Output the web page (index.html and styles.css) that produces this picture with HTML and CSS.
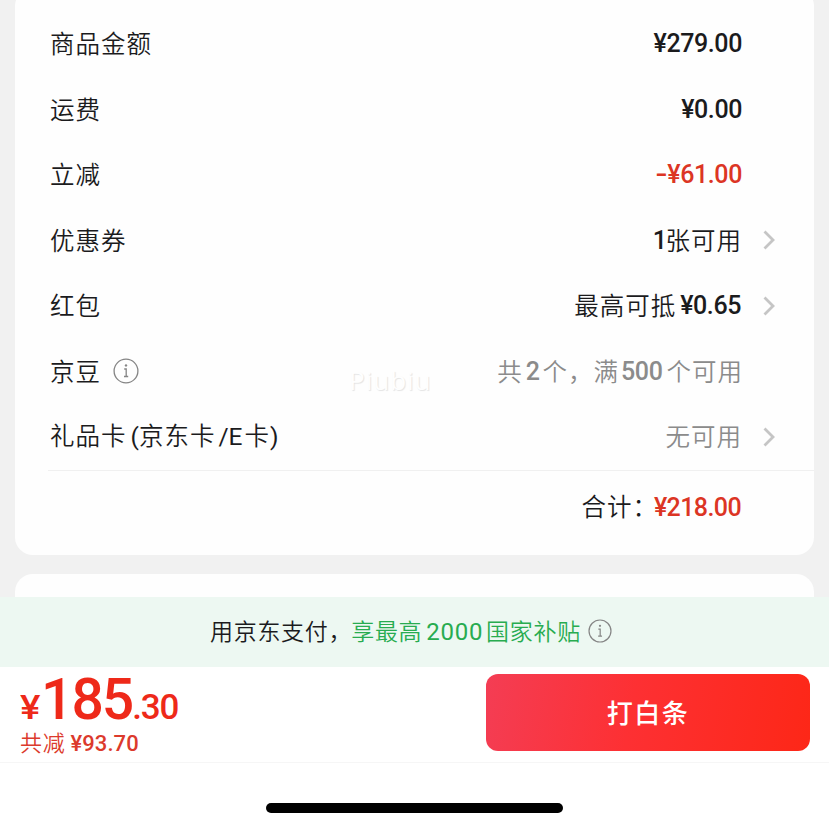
FILE: index.html
```html
<!DOCTYPE html>
<html lang="zh-CN">
<head>
<meta charset="utf-8">
<title>确认订单</title>
<link rel="stylesheet" href="styles.css">
</head>
<body>
<main class="screen">
  <section class="card summary">
    <div class="row"><span class="label">商品金额</span><span class="value"><b class="num">¥279.00</b></span></div>
    <div class="row"><span class="label">运费</span><span class="value"><b class="num">¥0.00</b></span></div>
    <div class="row"><span class="label">立减</span><span class="value red"><b class="num"><span class="minus">-</span>¥61.00</b></span></div>
    <div class="row"><span class="label">优惠券</span><span class="value cjk-end"><b class="num one">1</b>张可用</span>
      <svg class="chevron" viewBox="0 0 14 22"><path d="M2.5 2.5 11 11 2.5 19.5"/></svg></div>
    <div class="row"><span class="label">红包</span><span class="value">最高可抵<b class="num gap">¥0.65</b></span>
      <svg class="chevron" viewBox="0 0 14 22"><path d="M2.5 2.5 11 11 2.5 19.5"/></svg></div>
    <div class="row"><span class="label">京豆</span>
      <svg class="info" viewBox="0 0 26 26"><circle cx="13" cy="13" r="11.9"/><path d="M11.2 11h2v7.3M11 18.5h4.2"/><circle class="dot" cx="13" cy="7.4" r="1.2"/></svg>
      <span class="value gray cjk-end">共<b class="num two">2</b>个，满<b class="num five">500</b>个可用</span></div>
    <div class="row"><span class="label">礼品卡<span class="lat paren">(</span>京东卡<span class="lat slash">/E</span>卡<span class="lat">)</span></span><span class="value gray cjk-end">无可用</span>
      <svg class="chevron" viewBox="0 0 14 22"><path d="M2.5 2.5 11 11 2.5 19.5"/></svg></div>
    <div class="total"><span class="total-label">合计：</span><b class="num red">¥218.00</b></div>
    <span class="watermark">Piubiu</span>
  </section>
  <section class="card next"></section>
  <section class="promo">
    <span class="promo-dark">用京东支付，</span><span class="promo-green">享最高<span class="amount">2000</span>国家补贴</span>
    <svg class="info small" viewBox="0 0 26 26"><circle cx="13" cy="13" r="11.9"/><path d="M11.2 11h2v7.3M11 18.5h4.2"/><circle class="dot" cx="13" cy="7.4" r="1.2"/></svg>
  </section>
  <footer class="paybar">
    <div class="price">
      <div class="price-main"><span class="yen">¥</span><span class="whole">185</span><span class="cents">.30</span></div>
      <div class="saved">共减<b>¥93.70</b></div>
    </div>
    <button class="pay">打白条</button>
  </footer>
  <div class="home"><div class="home-bar"></div></div>
</main>
</body>
</html>
```

FILE: styles.css
```css
* { box-sizing: border-box; }
body { margin: 0; }
.screen {
  width: 829px;
  height: 828px;
  overflow: hidden;
  display: flex;
  flex-direction: column;
  background: #f1f1f1;
  color: #1b1b1d;
  font-family: "Noto Sans CJK SC", sans-serif;
  font-size: 24.5px;
  letter-spacing: 1px;
  white-space: nowrap;
}
.card { margin: 0 15px; background: #fefefe; border-radius: 18px; flex: none; }
.summary { position: relative; height: 567px; margin-top: -12px; padding-top: 23px; }
.row { display: flex; align-items: center; height: 65.5px; padding: 0 38px 0 35px; font-weight: 350; }
.label { line-height: 36px; padding-bottom: 1px; }
.value { margin-left: auto; margin-right: 34px; line-height: 36px; padding-bottom: 1px; display: flex; align-items: center; }
.chevron { width: 14px; height: 22px; margin-left: -14px; fill: none; stroke: #c5c5c5; stroke-width: 2.8; }
.cjk-end { margin-right: 33px; }
.cjk-end + .chevron { margin-left: -13px; }
.num { font-family: Roboto, sans-serif; font-weight: 500; font-size: 25px; letter-spacing: -.4px; position: relative; top: 1px; }
.minus { display: inline-block; transform: scaleX(1.4); margin-right: 2px; }
.one { margin-right: -1px; }
.gap { margin-left: 4px; margin-right: 1px; }
.red { color: #dc3524; }
.gray { color: #8b8b8b; }
.two { margin: 0 3px; }
.five { margin: 0 4px 0 2px; }
.lat { font-family: Roboto, sans-serif; font-weight: 400; letter-spacing: 0; }
.paren { margin-left: 4px; }
.slash { margin: 0 2px 0 3px; }
.info { width: 26px; height: 26px; margin-left: 12px; fill: none; stroke: #858585; stroke-width: 1.3; flex: none; }
.info .dot { fill: #858585; stroke: none; }
.total { display: flex; align-items: center; justify-content: flex-end; height: 73px; margin-left: 33px; padding-right: 73px; border-top: 1px solid #f0f0f0; }
.total .num { letter-spacing: -.6px; }
.total-label { font-weight: 350; margin-right: -4px; padding-bottom: 2px; }
.watermark {
  position: absolute; left: 334px; top: 374px;
  font: 26px/36px "Open Sans", sans-serif;
  letter-spacing: 1px; color: #fefefe;
  text-shadow: 1px 1px 1px #e4e4e4;
}
.next { height: 23px; margin-top: 19px; border-radius: 18px 18px 0 0; }
.promo { height: 70px; flex: none; display: flex; align-items: center; background: #edf8f2; padding: 0 0 2px 210px; font-size: 23px; letter-spacing: .7px; }
.promo-dark { margin-right: -1px; }
.promo-green { color: #28ac50; }
.promo-dark, .promo-green { font-weight: 350; padding-bottom: 2px; }
.amount { font-family: Roboto, sans-serif; font-weight: 400; font-size: 24px; margin: 0 3px 0 4px; }
.small { width: 24px; height: 24px; margin-left: 7px; }
.paybar { height: 96px; flex: none; background: #fff; border-bottom: 1px solid #f6f6f6; display: flex; justify-content: space-between; padding: 7px 19px 0 20px; }
.price { color: #ee2919; }
.price-main { height: 50px; line-height: 52px; font-family: Roboto, sans-serif; font-weight: 500; letter-spacing: 0; display: flex; align-items: baseline; }
.yen { font-size: 34px; transform: scaleX(1.13); transform-origin: left; margin-right: 3px; }
.whole { font-size: 57px; letter-spacing: -2px; }
.cents { font-size: 35px; letter-spacing: -1.2px; }
.saved { font-size: 22px; line-height: 34px; color: #dc3a2c; letter-spacing: .7px; font-weight: 350; }
.saved b { font-family: Roboto, sans-serif; font-weight: 500; letter-spacing: .1px; margin-left: 5px; }
.pay { width: 324px; height: 77px; border: 0; border-radius: 12px; padding: 0 0 2px; background: linear-gradient(100deg, #f43d54, #fd3033 45%, #fd2717); color: #fff; font: 500 26px "Noto Sans CJK SC", sans-serif; letter-spacing: 1.5px; }
.home { flex: 1; background: #fff; padding-top: 40px; }
.home-bar { width: 297px; height: 10px; margin-left: 266px; border-radius: 5px; background: #000; }
```
